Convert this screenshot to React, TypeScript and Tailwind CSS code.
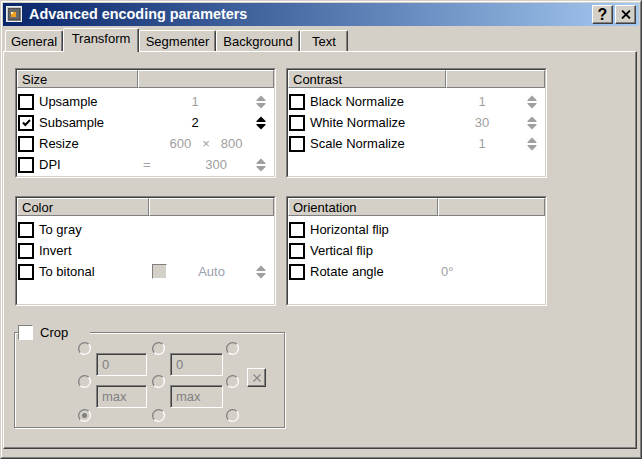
import React from "react";

const ink = "#000";

function Check({ checked }: { checked?: boolean }) {
	return (
		<span className="flex h-[16px] w-[16px] shrink-0 items-center justify-center border-2 border-black bg-white">
			{checked && (
				<svg width="9" height="8" viewBox="0 0 9 8">
					<polyline
						points="1,3.5 3.3,6 8,1"
						fill="none"
						stroke={ink}
						strokeWidth="2"
					/>
				</svg>
			)}
		</span>
	);
}

function Spin({ on }: { on?: boolean }) {
	const c = on ? "#000" : "#a0a0a0";
	return (
		<svg width="10" height="14" viewBox="0 0 10 14" className="shrink-0">
			<path d="M5 0.5 L9.5 5 L9.5 6 L0.5 6 L0.5 5 Z" fill={c} />
			<path d="M0.5 8 L9.5 8 L9.5 9 L5 13.5 L0.5 9 Z" fill={c} />
		</svg>
	);
}

function Radio({ on }: { on?: boolean }) {
	return (
		<svg width="13" height="13" viewBox="0 0 13 13" className="block">
			<path d="M2.26 10.74 A6 6 0 0 1 10.74 2.26" stroke="#808080" strokeWidth="1.3" fill="none" />
			<path d="M10.74 2.26 A6 6 0 0 1 2.26 10.74" stroke="#ffffff" strokeWidth="1.3" fill="none" />
			{on && <circle cx="6.5" cy="6.5" r="2.5" fill="#808080" />}
		</svg>
	);
}

function Field({ value, width }: { value: string; width: string }) {
	return (
		<div
			className={`flex h-[23px] ${width} items-center border border-t-[#808080] border-l-[#808080] border-b-white border-r-white pl-[5px] text-[#808080] shadow-[inset_1px_1px_0_#404040]`}
		>
			{value}
		</div>
	);
}

function Group({
	title,
	split,
	children,
}: {
	title: string;
	split: string;
	children: React.ReactNode;
}) {
	return (
		<div className="h-[110px] border border-t-[#808080] border-l-[#808080] border-b-white border-r-white">
			<div className="h-full border border-t-[#404040] border-l-[#404040] border-b-[#d4d0c8] border-r-[#d4d0c8] bg-white">
				<div className="flex h-[18px]">
					<div
						className={`flex ${split} items-center border border-t-white border-l-white border-b-[#808080] border-r-[#808080] bg-[#d4d0c8] pl-[4px]`}
					>
						{title}
					</div>
					<div className="flex-1 border border-t-white border-l-white border-b-[#808080] border-r-[#808080] bg-[#d4d0c8]" />
				</div>
				<div className="pt-[3px]">{children}</div>
			</div>
		</div>
	);
}

function Row({ children }: { children: React.ReactNode }) {
	return <div className="flex h-[21px] items-center pl-px">{children}</div>;
}

const Tab = ({ label, width, active }: { label: string; width: string; active?: boolean }) =>
	active ? (
		<div
			className={`relative z-10 -mb-px flex h-[24px] ${width} items-start justify-center rounded-t-[2px] border-l border-t border-r border-l-white border-t-white border-r-[#404040] bg-[#d4d0c8] pt-[3px] shadow-[inset_-1px_0_0_#808080]`}
		>
			{label}
		</div>
	) : (
		<div
			className={`flex h-[21px] ${width} items-center justify-center rounded-t-[2px] border-l border-t border-r border-l-white border-t-white border-r-[#404040] shadow-[inset_-1px_0_0_#808080]`}
		>
			{label}
		</div>
	);

export default function App() {
	const gray = "text-[#a0a0a0]";

	return (
		<div className="h-[459px] w-[642px] border border-t-[#d4d0c8] border-l-[#d4d0c8] border-b-[#404040] border-r-[#404040] bg-[#d4d0c8] font-['Liberation_Sans',Arial,sans-serif] text-[13px] leading-none text-black">
			<div className="h-full border border-t-white border-l-white border-b-[#808080] border-r-[#808080] p-px">
				{/* title bar */}
				<div className="flex h-[23px] items-center bg-linear-to-r from-[#0a246a] to-[#a6caf0] pr-[3px] pl-[3px]">
					<svg width="16" height="16" viewBox="0 0 16 16" className="mb-[2px]">
						<rect x="0" y="0" width="16" height="16" fill="#c8c8c8" />
						<rect x="0.5" y="0.5" width="15" height="15" fill="none" stroke="#f0f0f0" />
						<rect x="2" y="2" width="12" height="12" fill="#505050" />
						<rect x="3" y="3" width="10" height="10" fill="#6a6a6a" />
						<rect x="5" y="6" width="5" height="5" fill="#f0a020" />
						<rect x="5" y="6" width="2" height="2" fill="#fff0b0" />
						<rect x="14" y="2" width="1" height="13" fill="#808080" />
						<rect x="2" y="14" width="13" height="1" fill="#808080" />
					</svg>
					<span className="ml-[7px] text-[14.4px] font-bold text-white">
						Advanced encoding parameters
					</span>
					<div className="ml-auto flex gap-[2px]">
						<div className="flex h-[19px] w-[21px] items-center justify-center border border-t-white border-l-white border-b-[#404040] border-r-[#404040] bg-[#d4d0c8] text-[16px] font-bold shadow-[inset_-1px_-1px_0_#808080]">
							?
						</div>
						<div className="flex h-[19px] w-[21px] items-center justify-center border border-t-white border-l-white border-b-[#404040] border-r-[#404040] bg-[#d4d0c8] shadow-[inset_-1px_-1px_0_#808080]">
							<svg width="10" height="9" viewBox="0 0 10 9">
								<path d="M1 0.5 L9 8.5 M9 0.5 L1 8.5" stroke="#000" strokeWidth="1.8" />
							</svg>
						</div>
					</div>
				</div>

				{/* tabs */}
				<div className="mt-[2px] flex h-[23px] items-end pl-[2px]">
					<Tab label="General" width="w-[58px]" />
					<Tab label="Transform" width="w-[76px]" active />
					<Tab label="Segmenter" width="w-[77px]" />
					<Tab label="Background" width="w-[84px]" />
					<Tab label="Text" width="w-[48px]" />
				</div>

				{/* page */}
				<div className="h-[398px] w-[634px] border border-t-white border-l-white border-b-[#404040] border-r-[#404040] pt-[16px] pl-[11px] shadow-[inset_-1px_-1px_0_#808080]">
					<div className="grid grid-cols-[261px_261px] gap-x-[10px] gap-y-[18px]">
						<Group title="Size" split="w-[121px]">
							<Row>
								<Check />
								<span className="ml-[5px] w-[111px]">Upsample</span>
								<span className={`w-[90px] text-center ${gray}`}>1</span>
								<span className="ml-[16px]"><Spin /></span>
							</Row>
							<Row>
								<Check checked />
								<span className="ml-[5px] w-[111px]">Subsample</span>
								<span className="w-[90px] text-center">2</span>
								<span className="ml-[16px]"><Spin on /></span>
							</Row>
							<Row>
								<Check />
								<span className="ml-[5px] w-[111px]">Resize</span>
								<span className={`flex w-[112px] justify-center gap-[11px] ${gray}`}>
									<span>600</span>
									<span>×</span>
									<span>800</span>
								</span>
							</Row>
							<Row>
								<Check />
								<span className="ml-[5px] w-[104px]">DPI</span>
								<span className={`w-[7px] ${gray}`}>=</span>
								<span className={`w-[77px] text-right ${gray}`}>300</span>
								<span className="ml-[29px]"><Spin /></span>
							</Row>
						</Group>

						<Group title="Contrast" split="w-[158px]">
							<Row>
								<Check />
								<span className="ml-[5px] w-[128px]">Black Normalize</span>
								<span className={`w-[88px] text-center ${gray}`}>1</span>
								<span className="ml-px"><Spin /></span>
							</Row>
							<Row>
								<Check />
								<span className="ml-[5px] w-[128px]">White Normalize</span>
								<span className={`w-[88px] text-center ${gray}`}>30</span>
								<span className="ml-px"><Spin /></span>
							</Row>
							<Row>
								<Check />
								<span className="ml-[5px] w-[128px]">Scale Normalize</span>
								<span className={`w-[88px] text-center ${gray}`}>1</span>
								<span className="ml-px"><Spin /></span>
							</Row>
						</Group>

						<Group title="Color" split="w-[132px]">
							<Row>
								<Check />
								<span className="ml-[5px]">To gray</span>
							</Row>
							<Row>
								<Check />
								<span className="ml-[5px]">Invert</span>
							</Row>
							<Row>
								<Check />
								<span className="ml-[5px] w-[113px]">To bitonal</span>
								<span className="h-[15px] w-[15px] border border-t-[#808080] border-l-[#808080] border-b-white border-r-white bg-[#d4d0c8]" />
								<span className="w-[89px] text-center text-[#9aa0ae]">Auto</span>
								<Spin />
							</Row>
						</Group>

						<Group title="Orientation" split="w-[150px]">
							<Row>
								<Check />
								<span className="ml-[5px]">Horizontal flip</span>
							</Row>
							<Row>
								<Check />
								<span className="ml-[5px]">Vertical flip</span>
							</Row>
							<Row>
								<Check />
								<span className="ml-[5px] w-[131px]">Rotate angle</span>
								<span className={gray}>0°</span>
							</Row>
						</Group>
					</div>

					{/* crop */}
					<fieldset className="mt-[18px] -ml-px h-[104px] w-[271px] border border-[#808080] shadow-[inset_1px_1px_0_#fff,1px_1px_0_#fff]">
						<legend className="ml-[3px] flex h-[16px] w-[72px] items-center bg-[#d4d0c8]">
							<span className="h-[15px] w-[15px] border border-t-[#808080] border-l-[#808080] border-b-white border-r-white bg-white" />
							<span className="ml-[7px]">Crop</span>
						</legend>
						<div className="flex items-start pt-[2px] pl-[63px]">
							<div className="flex flex-col">
								<Radio />
								<div className="mt-[20px]"><Radio /></div>
								<div className="mt-[21px]"><Radio on /></div>
							</div>
							<div className="mt-[11px] ml-[5px] flex flex-col gap-[9px]">
								<Field value="0" width="w-[51px]" />
								<Field value="max" width="w-[51px]" />
							</div>
							<div className="ml-[5px] flex flex-col">
								<Radio />
								<div className="mt-[20px]"><Radio /></div>
								<div className="mt-[21px]"><Radio /></div>
							</div>
							<div className="mt-[11px] ml-[5px] flex flex-col gap-[9px]">
								<Field value="0" width="w-[53px]" />
								<Field value="max" width="w-[53px]" />
							</div>
							<div className="ml-[3px] flex flex-col">
								<Radio />
								<div className="mt-[20px]"><Radio /></div>
								<div className="mt-[21px]"><Radio /></div>
							</div>
							<div className="mt-[26px] ml-[8px] flex h-[19px] w-[19px] items-center justify-center border border-t-white border-l-white border-b-[#404040] border-r-[#404040] shadow-[inset_-1px_-1px_0_#808080]">
								<svg width="8" height="8" viewBox="0 0 8 8">
									<path d="M0.5 0.5 L7.5 7.5 M7.5 0.5 L0.5 7.5" stroke="#808080" strokeWidth="1.1" />
								</svg>
							</div>
						</div>
					</fieldset>
				</div>
			</div>
		</div>
	);
}
